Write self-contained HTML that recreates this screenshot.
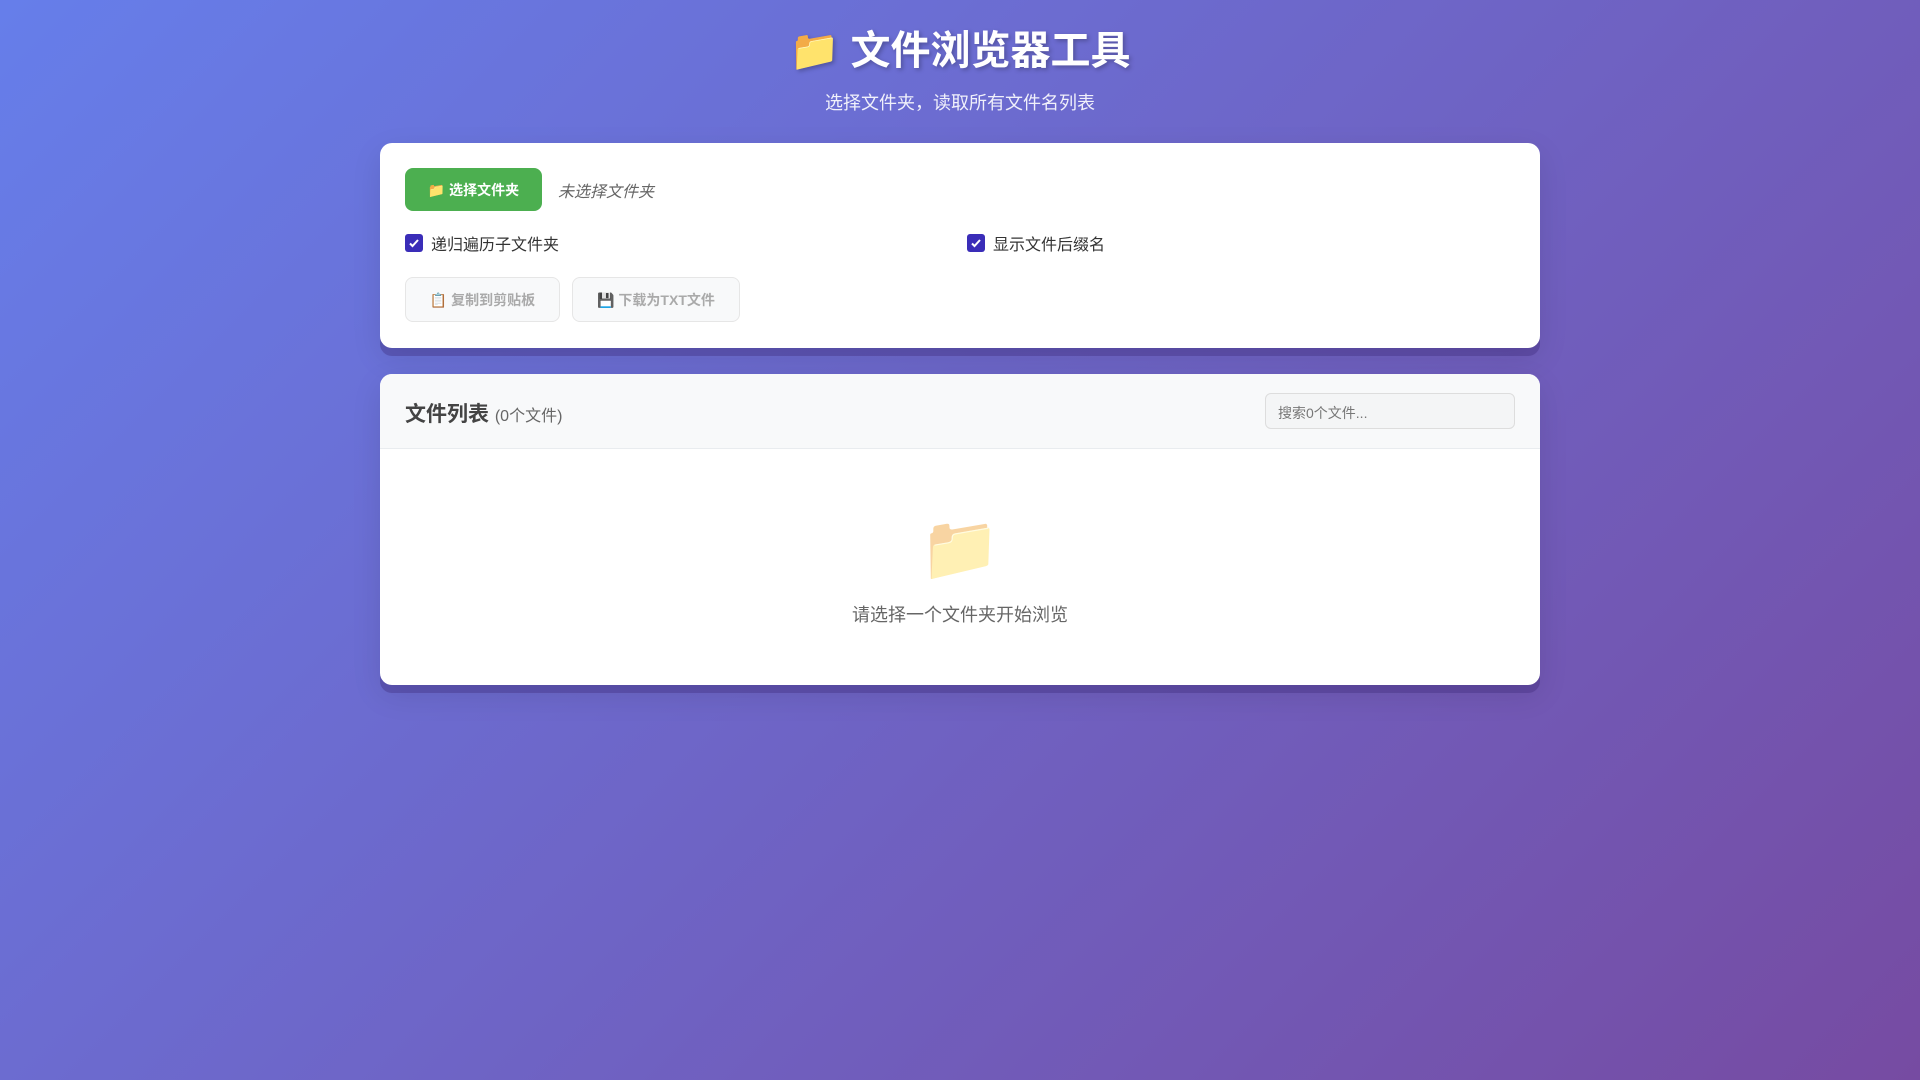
<!DOCTYPE html>
<html><head><meta charset="utf-8"><style>
*{box-sizing:border-box;margin:0;padding:0}
body{width:1920px;height:1080px;overflow:hidden;background:linear-gradient(135deg,#667eea 0%,#764ba2 100%);font-family:"Liberation Sans","Noto Sans CJK SC",sans-serif;color:#333}
h1{position:absolute;top:23px;left:0;width:1920px;text-align:center;color:#fff;font-size:40px;font-weight:bold;text-shadow:2px 2px 4px rgba(0,0,0,.25);line-height:56px}
.sub{position:absolute;top:89px;left:0;width:1920px;text-align:center;color:rgba(255,255,255,.9);font-size:18px}
.card{position:absolute;left:380px;width:1160px;background:#fff;border-radius:12px;box-shadow:0 8px 0 rgba(60,40,120,.35),0 10px 30px rgba(0,0,0,.1);overflow:hidden}
.c1{top:143px;height:205px}
.c2{top:374px;height:311px}
.btn{position:absolute;border-radius:8px;font-size:14px;font-weight:bold;display:flex;align-items:center;justify-content:center}
.green{left:25px;top:25px;width:137px;height:43px;background:#4caf50;color:#fff}
.none{position:absolute;left:178px;top:35px;font-style:italic;color:#666;font-size:16px}
.chk{position:absolute;top:88px;font-size:16px;display:flex;align-items:center;color:#333}
.box{width:18px;height:18px;background:#3a2db8;border-radius:3px;margin-right:8px;display:flex;align-items:center;justify-content:center}
.dis{top:134px;height:45px;background:#f8f9fa;border:1px solid #e6e6e6;color:#aaa}
.hdr{height:75px;background:#f8f9fa;border-bottom:1px solid #e9ecef;position:relative}
.ht{position:absolute;left:25px;top:24px;font-size:21px;font-weight:bold;color:#444}
.ht span{font-size:16px;font-weight:normal;color:#666}
.search{position:absolute;left:885px;top:19px;width:250px;height:36px;border:1px solid #ddd;border-radius:6px;background:#f4f5f6;font-size:14px;color:#777;padding:9px 12px}
.emp{position:absolute;top:134px;width:100%;text-align:center;font-size:64px;opacity:.5;line-height:80px}
.et{position:absolute;top:227px;width:100%;text-align:center;font-size:18px;color:#666}
</style></head><body>
<h1>📁 文件浏览器工具</h1>
<div class="sub">选择文件夹，读取所有文件名列表</div>
<div class="card c1">
<div class="btn green">📁 选择文件夹</div>
<div class="none">未选择文件夹</div>
<div class="chk" style="left:25px"><div class="box"><svg width="12" height="12" viewBox="0 0 12 12"><path d="M2 6.5l2.5 2.5L10 3" stroke="#fff" stroke-width="2" fill="none"/></svg></div>递归遍历子文件夹</div>
<div class="chk" style="left:587px"><div class="box"><svg width="12" height="12" viewBox="0 0 12 12"><path d="M2 6.5l2.5 2.5L10 3" stroke="#fff" stroke-width="2" fill="none"/></svg></div>显示文件后缀名</div>
<div class="btn dis" style="left:25px;width:155px">📋 复制到剪贴板</div>
<div class="btn dis" style="left:192px;width:168px">💾 下载为TXT文件</div>
</div>
<div class="card c2">
<div class="hdr"><div class="ht">文件列表 <span>(0个文件)</span></div><div class="search">搜索0个文件...</div></div>
<div class="emp">📁</div>
<div class="et">请选择一个文件夹开始浏览</div>
</div>
</body></html>
